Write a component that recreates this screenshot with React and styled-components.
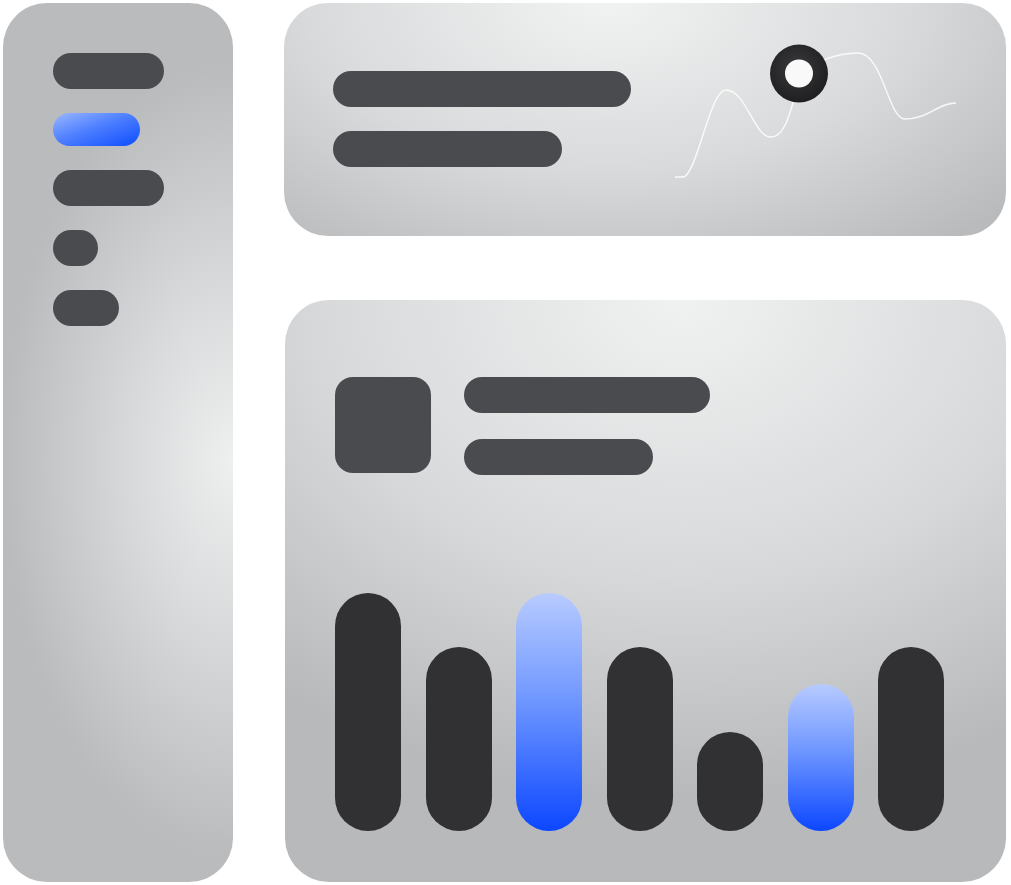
import React from "react";
import styled, { createGlobalStyle, css } from "styled-components";

const GlobalStyle = createGlobalStyle`
  html, body {
    margin: 0;
    padding: 0;
    background: #ffffff;
    font-family: "Inter", "Liberation Sans", sans-serif;
  }
`;

const sideItems = [
  { width: 111 },
  { width: 87, active: true },
  { width: 111 },
  { width: 45 },
  { width: 66 },
];

const bars = [
  { height: 238 },
  { height: 184 },
  { height: 238, accent: true },
  { height: 184 },
  { height: 99 },
  { height: 147, accent: true },
  { height: 184 },
];

const WaveChart = () => (
  <ChartSvg width="292" height="145" viewBox="0 0 292 145">
    <defs>
      <radialGradient id="ring" cx="45%" cy="40%" r="60%">
        <stop offset="0%" stopColor="#3a3a3c" />
        <stop offset="100%" stopColor="#1f1f21" />
      </radialGradient>
    </defs>
    <path
      d="M7,137 L16,137 C30,130 42,50 58,50 C78,50 86,97 103,97 C122,97 125,50 135,35 C145,22 168,13 190,13 C215,13 220,79 237,79 C260,79 270,63 288,63"
      fill="none"
      stroke="#ffffff"
      strokeOpacity="0.85"
      strokeWidth="1.4"
    />
    <circle cx="131" cy="33.5" r="29" fill="url(#ring)" />
    <circle cx="131" cy="33.5" r="14" fill="#f9f9f9" />
  </ChartSvg>
);

const App = () => {
  return (
    <>
      <GlobalStyle />
      <Page>
        <Sidebar>
          {sideItems.map((item, i) => (
            <SidePill key={i} $width={item.width} $active={item.active} />
          ))}
        </Sidebar>
        <Main>
          <TopCard>
            <TextLines>
              <Line $width={298} />
              <Line $width={229} />
            </TextLines>
            <WaveChart />
          </TopCard>
          <BottomCard>
            <CardHeader>
              <Avatar />
              <HeaderLines>
                <Line $width={246} />
                <Line $width={189} />
              </HeaderLines>
            </CardHeader>
            <Bars>
              {bars.map((bar, i) => (
                <Bar key={i} $accent={bar.accent} style={{ height: bar.height }} />
              ))}
            </Bars>
          </BottomCard>
        </Main>
      </Page>
    </>
  );
};

export default App;

const pill = css`
  border-radius: 999px;
  background: #4a4b4f;
`;

const Page = styled.div`
  display: grid;
  grid-template-columns: 230px 722px;
  column-gap: 51px;
  padding: 3px 0 0 3px;
  width: 1011px;
  height: 885px;
  box-sizing: border-box;
`;

const Sidebar = styled.div`
  height: 879px;
  border-radius: 44px;
  background: radial-gradient(
    ellipse 100% 45% at 100% 52%,
    #eeefef 0%,
    #d8d9da 45%,
    #babbbd 100%
  );
  padding: 50px 0 0 50px;
  box-sizing: border-box;
  display: flex;
  flex-direction: column;
  gap: 24px;
`;

const SidePill = styled.div`
  ${pill};
  width: ${(p) => p.$width}px;
  height: ${(p) => (p.$active ? 33 : 36)}px;
  ${(p) =>
    p.$active &&
    css`
      background: linear-gradient(160deg, #9ab8ff 0%, #4f80ff 45%, #0d4cff 100%);
    `}
`;

const Main = styled.div`
  display: flex;
  flex-direction: column;
  gap: 64px;
`;

const TopCard = styled.div`
  height: 233px;
  border-radius: 44px;
  background: radial-gradient(
    ellipse 75% 130% at 45% 0%,
    #f1f2f2 0%,
    #d9dadb 55%,
    #b9babc 100%
  );
  display: flex;
  justify-content: space-between;
  align-items: flex-start;
  padding: 37px 46px 0 49px;
  box-sizing: border-box;
`;

const TextLines = styled.div`
  display: flex;
  flex-direction: column;
  gap: 24px;
  margin-top: 31px;
`;

const Line = styled.div`
  ${pill};
  width: ${(p) => p.$width}px;
  height: 36px;
`;

const ChartSvg = styled.svg`
  display: block;
`;

const BottomCard = styled.div`
  height: 582px;
  margin-left: 1px;
  border-radius: 44px;
  background: radial-gradient(
    ellipse 90% 85% at 55% 0%,
    #f0f1f1 0%,
    #d8d9da 55%,
    #b8b9bb 100%
  );
  display: flex;
  flex-direction: column;
  justify-content: space-between;
  padding: 77px 50px 51px 50px;
  box-sizing: border-box;
`;

const CardHeader = styled.div`
  display: flex;
  align-items: flex-start;
  gap: 33px;
`;

const Avatar = styled.div`
  width: 96px;
  height: 96px;
  border-radius: 18px;
  background: #4a4b4f;
`;

const HeaderLines = styled.div`
  display: flex;
  flex-direction: column;
  gap: 26px;
`;

const Bars = styled.div`
  display: flex;
  align-items: flex-end;
  gap: 24.5px;
`;

const Bar = styled.div`
  width: 66px;
  border-radius: 999px;
  background: #313133;
  ${(p) =>
    p.$accent &&
    css`
      background: linear-gradient(180deg, #b8cbff 0%, #6f97ff 45%, #0c47ff 100%);
    `}
`;
